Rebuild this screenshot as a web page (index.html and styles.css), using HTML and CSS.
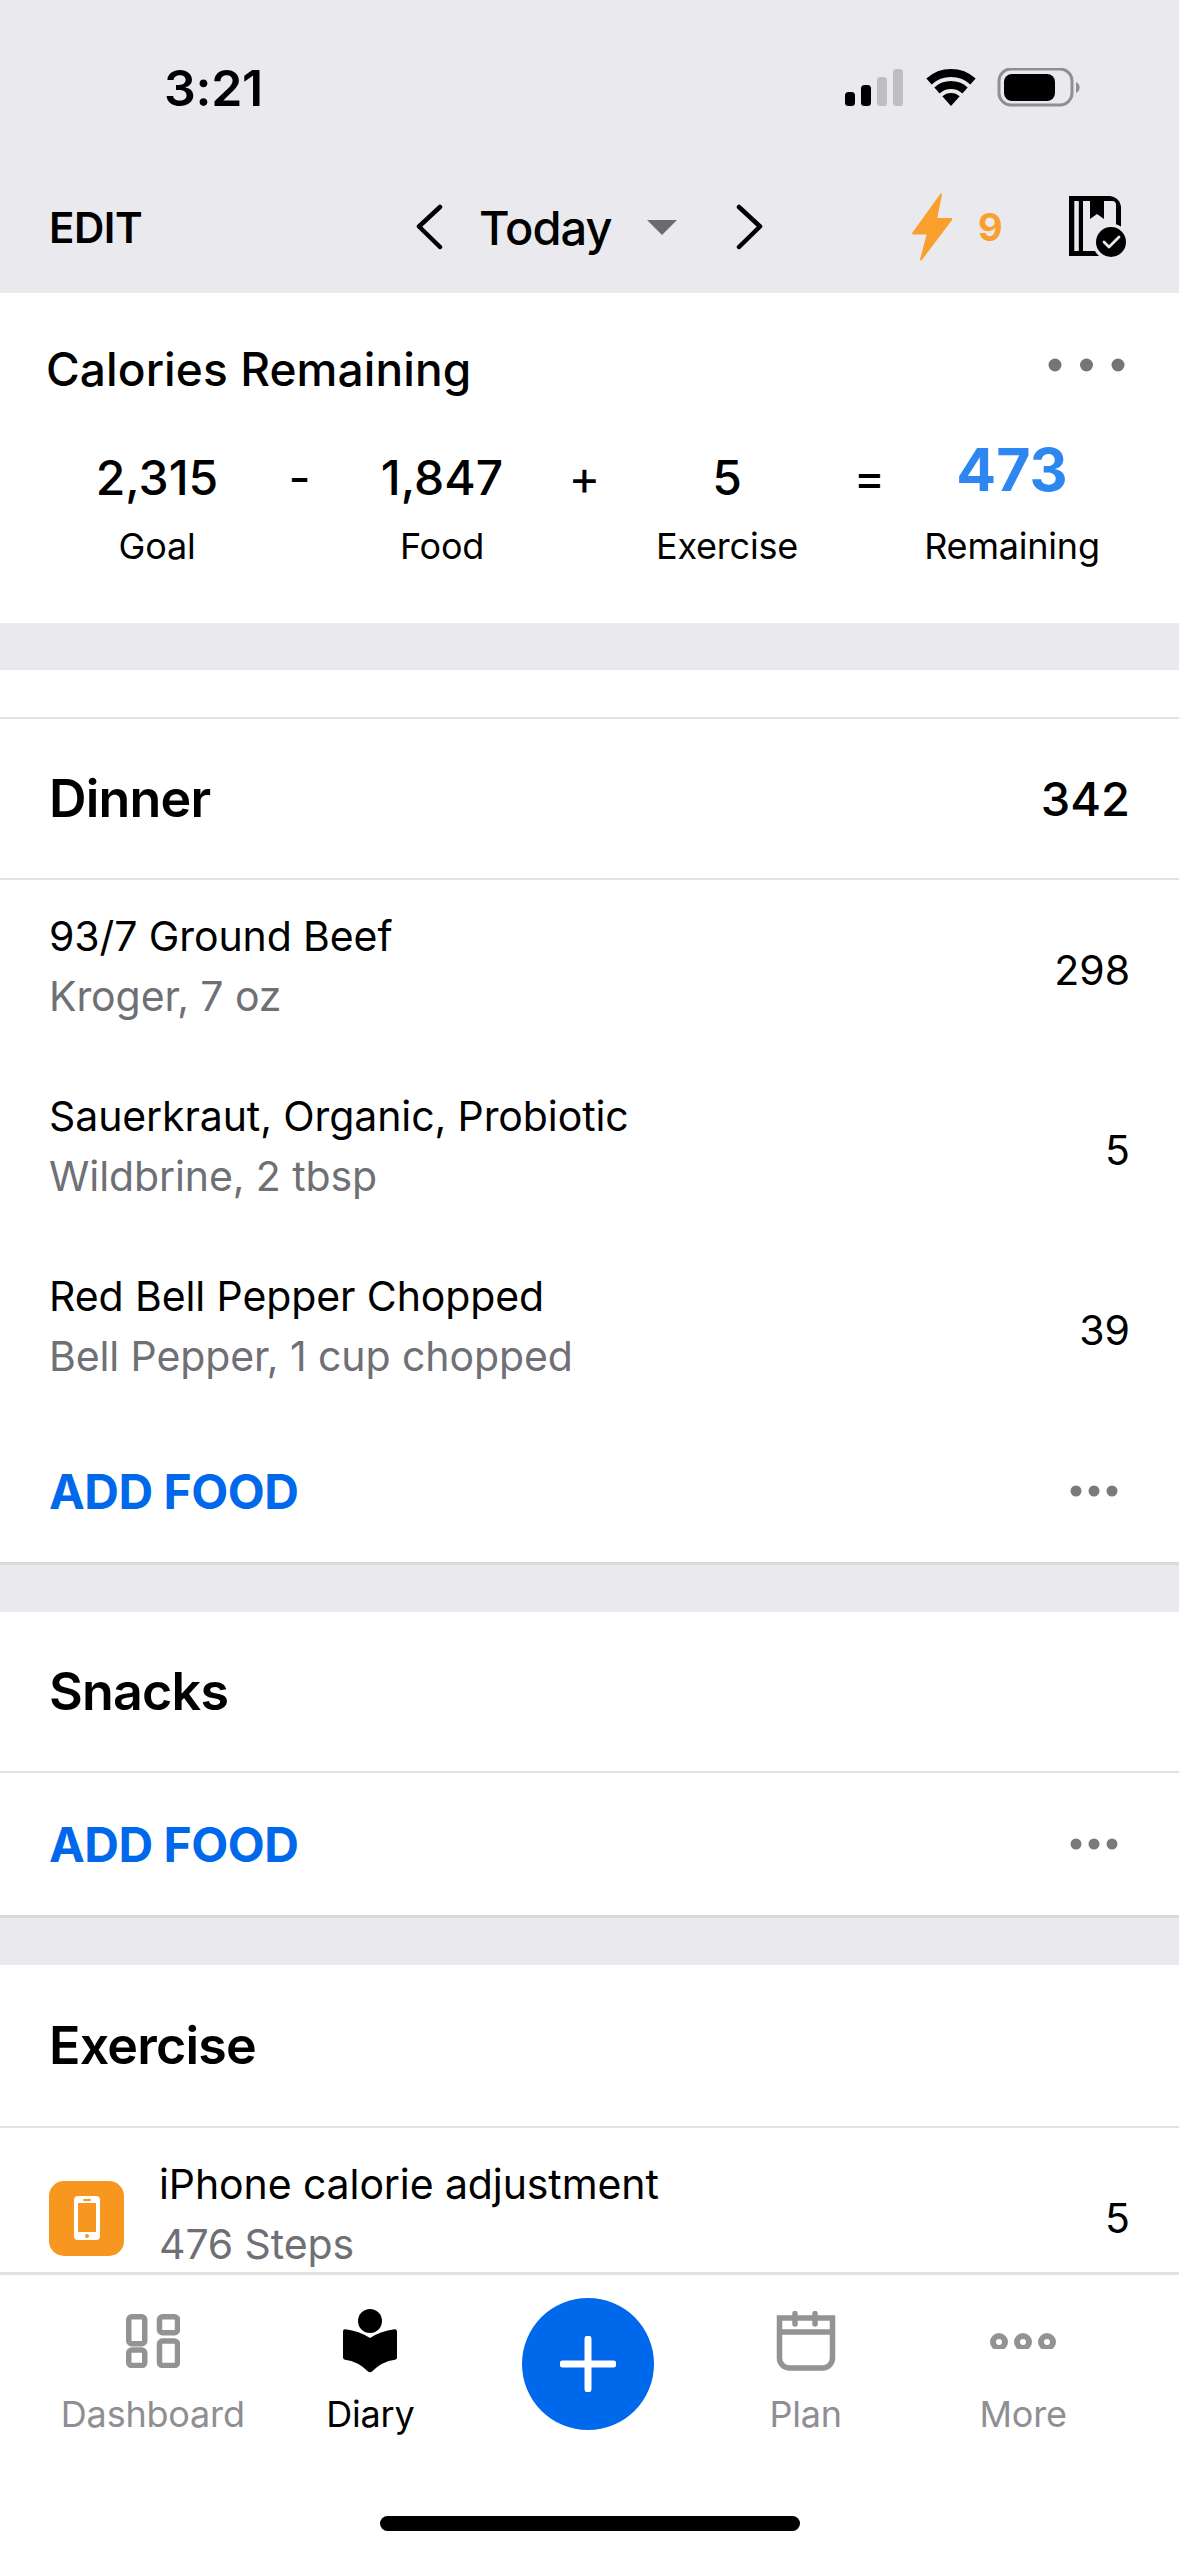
FILE: index.html
```html
<!DOCTYPE html>
<html lang="en">
<head>
<meta charset="utf-8">
<title>Diary</title>
<link rel="stylesheet" href="styles.css">
</head>
<body>
<div class="app">
  <header class="top">
    <div class="status">
      <span class="time">3:21</span>
      <svg class="status-icons" width="236" height="40" viewBox="846 68 236 40">
        <rect x="846" y="92" width="10" height="14" rx="3.500" fill="#000"/>
        <rect x="862" y="85" width="10" height="21" rx="3.500" fill="#000"/>
        <rect x="878" y="77" width="10" height="29" rx="3.500" fill="#bdbdc2"/>
        <rect x="894" y="69" width="10" height="37" rx="3.500" fill="#bdbdc2"/>
        <path d="M930 81.500A33 33 0 0 1 974 81.500" fill="none" stroke="#000" stroke-width="8"/>
        <path d="M938 90.400A21 21 0 0 1 966 90.400" fill="none" stroke="#000" stroke-width="8"/>
        <path d="M952 106L943.300 96.300A13 13 0 0 1 960.700 96.300z" fill="#000"/>
        <rect x="1000" y="69" width="73" height="36" rx="12" fill="none" stroke="#8e8e93" stroke-width="3"/>
        <rect x="1005" y="74" width="51" height="27" rx="8" fill="#000"/>
        <path d="M1077 82a6 6 0 0 1 0 11z" fill="#8e8e93"/>
      </svg>
    </div>
    <div class="nav">
      <span class="edit">EDIT</span>
      <svg class="chev-l" width="30" height="46" viewBox="0 0 30 46"><path d="M26 3 5 22.500 26 43" fill="none" stroke="#000" stroke-width="4.500" stroke-linecap="round" stroke-linejoin="round"/></svg>
      <span class="today">Today</span>
      <svg class="caret" width="30" height="15" viewBox="0 0 30 15"><path d="M0 0h30L15 15z" fill="#6b6b70"/></svg>
      <svg class="chev-r" width="30" height="46" viewBox="0 0 30 46"><path d="M4 3 25 22.500 4 43" fill="none" stroke="#000" stroke-width="4.500" stroke-linecap="round" stroke-linejoin="round"/></svg>
      <svg class="bolt" width="40" height="68" viewBox="0 0 40 68"><path d="M29 1.500 1 40.500h15L9 66.500 39.500 26H24z" fill="#f99f2e" stroke="#f99f2e" stroke-width="2" stroke-linejoin="round"/></svg>
      <span class="streak">9</span>
      <svg class="book" width="60" height="62" viewBox="1068 196 60 62">
        <path d="M1068 196H1108a12 12 0 0 1 12 12V256H1068z" fill="#000"/>
        <rect x="1073.300" y="201" width="4.500" height="50" fill="#eaeaee"/>
        <path d="M1082 201H1111a4 4 0 0 1 4 4V251H1082z" fill="#eaeaee"/>
        <path d="M1089 200V219L1096 214L1103 219V200z" fill="#000"/>
        <circle cx="1110" cy="242" r="18.500" fill="#eaeaee"/>
        <circle cx="1110" cy="242" r="15" fill="#000"/>
        <path d="M1103 242l5 5 10-10" fill="none" stroke="#eaeaee" stroke-width="2.800" stroke-linecap="round" stroke-linejoin="round"/>
      </svg>
    </div>
  </header>

  <main class="content">
    <section class="card calories">
      <div class="cal-head">
        <h2 class="cal-title">Calories Remaining</h2>
        <svg class="cal-dots" width="78" height="14" viewBox="0 0 78 14"><circle cx="7" cy="7" r="6.500" fill="#757575"/><circle cx="38.500" cy="7" r="6.500" fill="#757575"/><circle cx="70" cy="7" r="6.500" fill="#757575"/></svg>
      </div>
      <div class="cal-grid">
        <div class="cal-col"><span class="cal-val">2,315</span><span class="cal-lab">Goal</span></div>
        <span class="cal-op">-</span>
        <div class="cal-col"><span class="cal-val">1,847</span><span class="cal-lab">Food</span></div>
        <span class="cal-op">+</span>
        <div class="cal-col"><span class="cal-val">5</span><span class="cal-lab">Exercise</span></div>
        <span class="cal-op">=</span>
        <div class="cal-col"><span class="cal-val cal-rem">473</span><span class="cal-lab">Remaining</span></div>
      </div>
    </section>

    <section class="card meal">
      <div class="spacer-row"></div>
      <div class="sec-head"><h3>Dinner</h3><span class="sec-total">342</span></div>
      <div class="row"><div class="row-text"><span class="name">93/7 Ground Beef</span><span class="sub">Kroger, 7 oz</span></div><span class="cals">298</span></div>
      <div class="row"><div class="row-text"><span class="name">Sauerkraut, Organic, Probiotic</span><span class="sub">Wildbrine, 2 tbsp</span></div><span class="cals">5</span></div>
      <div class="row"><div class="row-text"><span class="name">Red Bell Pepper Chopped</span><span class="sub">Bell Pepper, 1 cup chopped</span></div><span class="cals">39</span></div>
      <div class="add"><span class="add-text">ADD FOOD</span><svg class="add-dots" width="50" height="12" viewBox="0 0 50 12"><circle cx="7" cy="6" r="5.500" fill="#7a7a7a"/><circle cx="25" cy="6" r="5.500" fill="#7a7a7a"/><circle cx="43" cy="6" r="5.500" fill="#7a7a7a"/></svg></div>
    </section>

    <section class="card meal">
      <div class="sec-head"><h3>Snacks</h3></div>
      <div class="add"><span class="add-text">ADD FOOD</span><svg class="add-dots" width="50" height="12" viewBox="0 0 50 12"><circle cx="7" cy="6" r="5.500" fill="#7a7a7a"/><circle cx="25" cy="6" r="5.500" fill="#7a7a7a"/><circle cx="43" cy="6" r="5.500" fill="#7a7a7a"/></svg></div>
    </section>

    <section class="card meal">
      <div class="sec-head sec-head-tall"><h3>Exercise</h3></div>
      <div class="row ex-row">
        <div class="ex-icon">
          <svg width="26" height="44" viewBox="0 0 26 44"><rect width="26" height="44" rx="4" fill="#fff"/><rect x="4" y="7" width="18" height="29" fill="#f7971f"/><rect x="9" y="3" width="8" height="2" rx="1" fill="#f7971f"/><circle cx="13" cy="40" r="2" fill="#f7971f"/></svg>
        </div>
        <div class="row-text"><span class="name">iPhone calorie adjustment</span><span class="sub">476 Steps</span></div>
        <span class="cals">5</span>
      </div>
    </section>
  </main>

  <footer class="tabs">
    <div class="tab-grid">
      <div class="tab">
        <div class="tab-icon-box">
          <svg width="54" height="54" viewBox="0 0 54 54" fill="none" stroke="#939393" stroke-width="5.500"><rect x="2.750" y="2.750" width="16" height="27" rx="3"/><rect x="33.500" y="2.750" width="18" height="16" rx="3"/><rect x="2.750" y="36" width="16" height="15.500" rx="3"/><rect x="33.500" y="27" width="18" height="24.500" rx="3"/></svg>
        </div>
        <span class="tab-lab">Dashboard</span>
      </div>
      <div class="tab tab-active">
        <div class="tab-icon-box">
          <svg width="56" height="64" viewBox="0 0 56 64"><circle cx="28" cy="12" r="12" fill="#000"/><path d="M1 22.500Q1 20 3.500 20.300 17 22 28 29 39 22 52.500 20.300 55 20 55 22.500V48.500Q55 50.500 53 50.800 40 52.500 30 62.500 28 64 26 62.500 16 52.500 3 50.800 1 50.500 1 48.500z" fill="#000"/></svg>
        </div>
        <span class="tab-lab">Diary</span>
      </div>
      <div class="tab-plus-wrap">
        <div class="plus"><svg width="56" height="56" viewBox="0 0 56 56"><path d="M28 3v50M3 28h50" stroke="#fff" stroke-width="7" stroke-linecap="round"/></svg></div>
      </div>
      <div class="tab">
        <div class="tab-icon-box">
          <svg width="60" height="60" viewBox="0 0 60 60" fill="none" stroke="#939393" stroke-width="5.500"><path d="M3.500 7H56.500V47a10 10 0 0 1-10 10H13.500a10 10 0 0 1-10-10zM3.500 21H56.500"/><path d="M19 2.500V13M39 2.500V13" stroke-linecap="round"/></svg>
        </div>
        <span class="tab-lab">Plan</span>
      </div>
      <div class="tab">
        <div class="tab-icon-box">
          <svg width="66" height="60" viewBox="0 0 66 60" fill="none"><g stroke="#939393" stroke-width="6" clip-path="url(#more-clip)"><circle cx="9" cy="31" r="6"/><circle cx="33" cy="31" r="6"/><circle cx="57" cy="31" r="6"/></g><defs><clipPath id="more-clip"><rect width="66" height="38"/></clipPath></defs></svg>
        </div>
        <span class="tab-lab">More</span>
      </div>
    </div>
    <div class="home-wrap"><div class="home"></div></div>
  </footer>
</div>
</body>
</html>
```
FILE: styles.css
```css
* { box-sizing: border-box; margin: 0; padding: 0; }
html, body { width: 1179px; height: 2556px; overflow: hidden; }
body { font-family: "Inter", "Liberation Sans", sans-serif; color: #000; background: #fff; }
.app { display: flex; flex-direction: column; height: 2556px; }

.top { height: 293px; background: #eaeaee; flex: none; }
.status { display: flex; justify-content: space-between; padding: 58px 98px 0 164px; height: 176px; }
.time { font-size: 50px; font-weight: 600; line-height: 60px; letter-spacing: -0.3px; }
.status-icons { margin-top: 10px; }

.nav { display: flex; align-items: center; height: 102px; padding-left: 49px; }
.nav > * { flex: none; }
.edit { font-size: 42px; font-weight: 600; width: 365px; letter-spacing: -0.5px; }
.chev-l { margin-right: 35px; }
.today { font-size: 47px; font-weight: 500; width: 168px; letter-spacing: -1px; }
.caret { margin-right: 58px; }
.chev-r { margin-right: 147px; }
.bolt { margin-right: 26px; }
.streak { font-size: 38px; font-weight: 700; color: #f99f2e; width: 91px; }

.content { flex: 1; min-height: 0; overflow: hidden; background: #eaeaee; display: flex; flex-direction: column; gap: 47px; }
.card { background: #fff; flex: none; }

.calories { height: 330px; padding-top: 46px; }
.cal-head { display: flex; justify-content: space-between; align-items: center; padding: 0 53px 0 46px; height: 60px; }
.cal-title { font-size: 46px; font-weight: 450; letter-spacing: 0.1px; }
.cal-dots { margin-top: -8px; }
.cal-grid { display: grid; grid-template-columns: 200px 85px 200px 85px 200px 85px 200px; padding-left: 57px; margin-top: 45px; }
.cal-col { display: flex; flex-direction: column; align-items: center; }
.cal-val { font-size: 48px; font-weight: 450; height: 80px; line-height: 68px; }
.cal-rem { font-size: 59px; font-weight: 700; color: #2e86f0; line-height: 52px; }
.cal-lab { font-size: 36px; line-height: 44px; letter-spacing: -0.2px; }
.cal-op { font-size: 48px; line-height: 68px; text-align: center; }

.meal { border-bottom: 3px solid #d9d9dc; }
.spacer-row { height: 49px; border-bottom: 2px solid #e2e2e4; }
.sec-head { display: flex; justify-content: space-between; align-items: center; height: 161px; padding: 0 49px; border-bottom: 2px solid #e2e2e4; }
.sec-head-tall { height: 163px; }
.sec-head h3 { font-size: 52px; font-weight: 600; letter-spacing: -0.8px; }
.sec-total { font-size: 47px; font-weight: 450; }

.row { display: flex; align-items: center; justify-content: space-between; height: 180px; padding: 0 49px; }
.row-text { display: flex; flex-direction: column; flex: 1; padding-bottom: 9px; }
.name { font-size: 41px; line-height: 60px; letter-spacing: -0.1px; }
.sub { font-size: 41px; line-height: 60px; color: #6f7075; letter-spacing: -0.1px; }
.cals { font-size: 41px; }

.add { display: flex; align-items: center; justify-content: space-between; height: 142px; padding: 0 60px 0 49px; }
.add-text { font-size: 48px; font-weight: 700; color: #0068ea; letter-spacing: -0.5px; }

.ex-icon { width: 75px; height: 75px; margin-right: 35px; border-radius: 15px; background: #f7971f; display: flex; align-items: center; justify-content: center; }

.tabs { flex: none; height: 284px; background: #fff; border-top: 3px solid #e2e2e4; display: flex; flex-direction: column; }
.tab-grid { display: grid; grid-template-columns: repeat(5, 217.6px); padding: 0 0 0 44px; height: 234px; }
.tab { display: flex; flex-direction: column; align-items: center; padding-top: 34px; }
.tab-icon-box { height: 64px; display: flex; align-items: center; margin-bottom: 19px; }
.tab-lab { font-size: 36px; line-height: 44px; color: #8e8e93; letter-spacing: -0.2px; }
.tab-active .tab-lab { color: #000; }
.tab-plus-wrap { display: flex; justify-content: center; padding-top: 23px; }
.plus { width: 132px; height: 132px; border-radius: 50%; background: #0068ea; display: flex; align-items: center; justify-content: center; }
.home-wrap { flex: 1; display: flex; justify-content: center; }
.home { width: 420px; height: 15px; border-radius: 8px; background: #000; margin-top: 7px; }
```
